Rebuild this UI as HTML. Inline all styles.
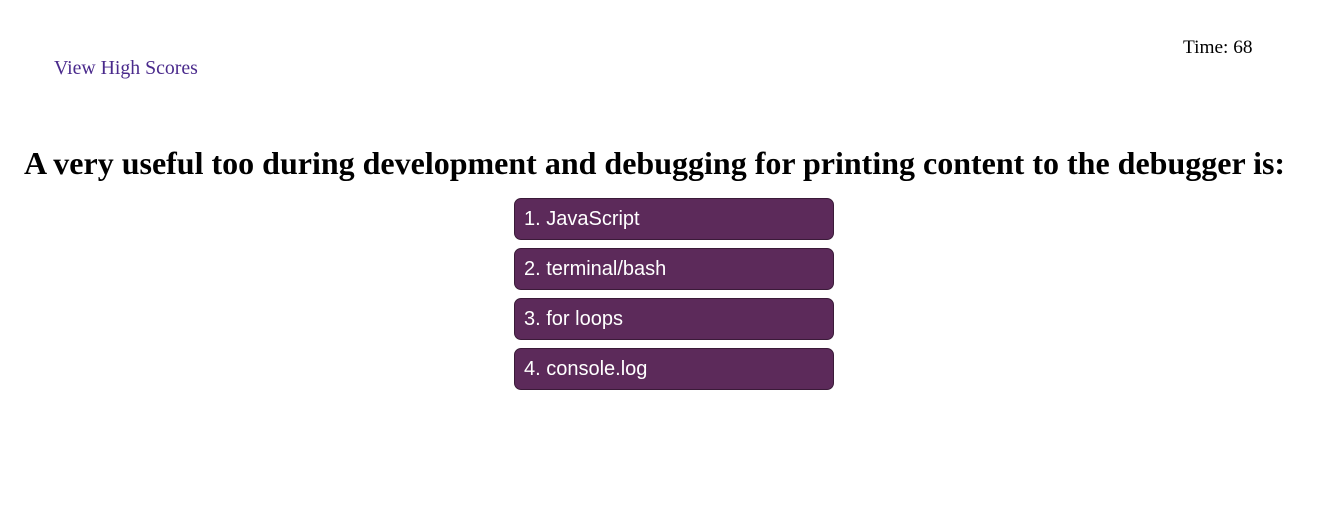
<!DOCTYPE html>
<html><head><style>
body{margin:0;width:1317px;height:507px;background:#fff;font-family:"Liberation Serif",serif;position:relative;overflow:hidden}
.link{position:absolute;left:54px;top:57px;font-size:19.8px;color:#4a2a8c}
.time{position:absolute;left:1183px;top:37px;font-size:19.3px;color:#000}
h1{position:absolute;top:145px;left:0;width:1309px;margin:0;text-align:center;font-size:32px;font-weight:bold;white-space:nowrap}
.b{position:absolute;left:514px;background:#5c2a5a;border:1px solid #3a1a38;border-radius:7px;color:#fff;font-family:"Liberation Sans",sans-serif;font-size:20px;line-height:40px;padding-left:9px;box-sizing:border-box;width:320px;height:42px}
</style></head><body>
<div class="link">View High Scores</div>
<div class="time">Time: 68</div>
<h1>A very useful too during development and debugging for printing content to the debugger is:</h1>
<div class="b" style="top:198px">1. JavaScript</div>
<div class="b" style="top:248px">2. terminal/bash</div>
<div class="b" style="top:298px">3. for loops</div>
<div class="b" style="top:348px">4. console.log</div>
</body></html>
